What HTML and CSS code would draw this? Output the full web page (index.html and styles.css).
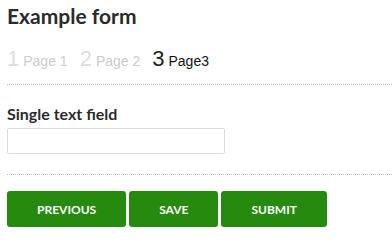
FILE: index.html
```html
<!DOCTYPE html>
<html>
<head>
<meta charset="utf-8">
<link rel="stylesheet" href="styles.css">
</head>
<body>
<form class="form">
  <h1 class="title">Example form</h1>
  <div class="pages">
    <span class="page"><span class="num">1</span><span class="label">Page 1</span></span>
    <span class="page"><span class="num">2</span><span class="label">Page 2</span></span>
    <span class="page active"><span class="num">3</span><span class="label">Page3</span></span>
  </div>
  <div class="sep"></div>
  <div class="field">
    <label class="field-label" for="f1">Single text field</label>
    <input class="text-input" id="f1" type="text">
  </div>
  <div class="sep sep-bottom"></div>
  <div class="buttons">
    <button type="button" class="btn">Previous</button>
    <button type="button" class="btn">Save</button>
    <button type="button" class="btn">Submit</button>
  </div>
</form>
</body>
</html>
```
FILE: styles.css
```css
html, body {
  margin: 0;
  padding: 0;
  background: #fff;
}
body {
  font-family: Lato, "Liberation Sans", sans-serif;
  color: #333;
  overflow: hidden;
}
.form {
  padding-left: 7px;
}
.title {
  margin: 3px 0 0;
  font-size: 21px;
  line-height: 25px;
  font-weight: 700;
  color: #2b2b2b;
}
.pages {
  display: flex;
  gap: 12px;
  margin-top: 18px;
  height: 25px;
  font-family: "Liberation Sans", Arial, sans-serif;
}
.page {
  display: inline-flex;
  align-items: baseline;
}
.num {
  font-size: 22px;
  line-height: 25px;
  color: #ddd;
}
.label {
  margin-left: 4px;
  font-size: 14px;
  color: #ccc;
}
.page.active .num {
  color: #222;
}
.page.active .label {
  color: #111;
}
.sep {
  margin-top: 13px;
  border-top: 1px dotted #bbb;
}
.field {
  margin-top: 19px;
  display: flex;
  flex-direction: column;
  align-items: flex-start;
}
.field-label {
  font-size: 16px;
  line-height: 19px;
  font-weight: 700;
  color: #2b2b2b;
}
.text-input {
  margin-top: 5px;
  box-sizing: border-box;
  width: 218px;
  height: 26px;
  border: 1px solid #ddd;
  border-radius: 2px;
  padding: 0 6px;
  font: inherit;
}
.sep-bottom {
  margin-top: 20px;
}
.buttons {
  display: flex;
  gap: 3px;
  margin-top: 16px;
}
.btn {
  height: 36px;
  padding: 0 30px;
  border: none;
  border-radius: 3px;
  background: #268a0f;
  color: #fff;
  font-family: Lato, "Liberation Sans", sans-serif;
  font-weight: 700;
  font-size: 12px;
  text-transform: uppercase;
}
```
